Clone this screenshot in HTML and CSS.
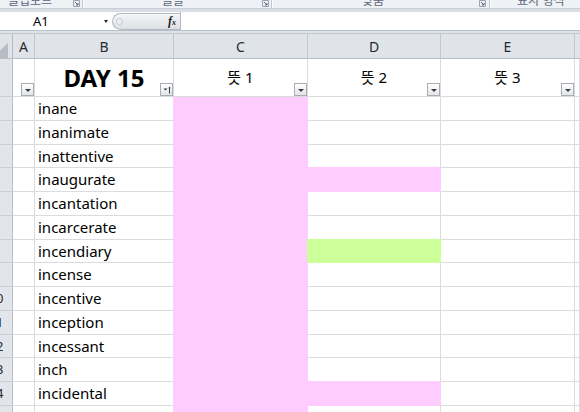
FILE: index.html
```html
<!DOCTYPE html>
<html lang="ko">
<head>
<meta charset="utf-8">
<title>DAY 15</title>
<link rel="stylesheet" href="styles.css">
</head>
<body>
<div class="app">
  <div class="ribbon">
    <div class="grp g1"><span class="glabel">클립보드</span><svg class="launch" viewBox="0 0 7 7"><path d="M0.5 0.5H6.5V6.5H0.5Z" fill="none" stroke="#9aa3ae"/><path d="M2 2L5 5M5 3V5H3" fill="none" stroke="#5d6877"/></svg></div>
    <div class="grp g2"><span class="glabel">글꼴</span><svg class="launch" viewBox="0 0 7 7"><path d="M0.5 0.5H6.5V6.5H0.5Z" fill="none" stroke="#9aa3ae"/><path d="M2 2L5 5M5 3V5H3" fill="none" stroke="#5d6877"/></svg></div>
    <div class="grp g3"><span class="glabel">맞춤</span><svg class="launch" viewBox="0 0 7 7"><path d="M0.5 0.5H6.5V6.5H0.5Z" fill="none" stroke="#9aa3ae"/><path d="M2 2L5 5M5 3V5H3" fill="none" stroke="#5d6877"/></svg></div>
    <div class="grp g4"><span class="glabel">표시 형식</span></div>
  </div>
  <div class="band"></div>
  <div class="fbar">
    <div class="namebox"><span class="ref">A1</span><span class="ddarrow"></span></div>
    <div class="fbtns"><span class="grip"></span><span class="fx"><i>f</i><span class="fxx">x</span></span></div>
    <div class="finput"></div>
  </div>
  <div class="band2"></div>
  <div class="sheet">
    <!-- column headers -->
    <div class="c ch corner"><svg class="tri" viewBox="0 0 12 18"><path d="M8 2V17H-8Z" fill="#b6bcc4"/></svg></div>
    <div class="c ch">A</div>
    <div class="c ch">B</div>
    <div class="c ch">C</div>
    <div class="c ch">D</div>
    <div class="c ch">E</div>
    <div class="c ch last"></div>

    <!-- row 1 -->
    <div class="c rh"><div class="rn">1</div></div>
    <div class="c hc"><span class="fb"><span class="dn"></span></span></div>
    <div class="c hc day">DAY 15<span class="fb"><svg class="sorti" viewBox="0 0 11 11"><path d="M2.5 4.5H6.5L4.5 6.5Z" fill="#3c3c3c"/><path d="M8.5 3V9.5" stroke="#3c3c3c"/><path d="M7.3 4.3L8.5 2.6L9.7 4.3Z" fill="#3c3c3c"/></svg></span></div>
    <div class="c hc mean">뜻 1<span class="fb"><span class="dn"></span></span></div>
    <div class="c hc mean">뜻 2<span class="fb"><span class="dn"></span></span></div>
    <div class="c hc mean">뜻 3<span class="fb"><span class="dn"></span></span></div>
    <div class="c"></div>

    <div class="c rh"><div class="rn">2</div></div><div class="c"></div><div class="c w">inane</div><div class="c pk top0"></div><div class="c"></div><div class="c"></div><div class="c"></div>
    <div class="c rh"><div class="rn">3</div></div><div class="c"></div><div class="c w">inanimate</div><div class="c pk"></div><div class="c"></div><div class="c"></div><div class="c"></div>
    <div class="c rh"><div class="rn">4</div></div><div class="c"></div><div class="c w">inattentive</div><div class="c pk"></div><div class="c"></div><div class="c"></div><div class="c"></div>
    <div class="c rh"><div class="rn">5</div></div><div class="c"></div><div class="c w">inaugurate</div><div class="c pk"></div><div class="c pk"></div><div class="c"></div><div class="c"></div>
    <div class="c rh"><div class="rn">6</div></div><div class="c"></div><div class="c w">incantation</div><div class="c pk"></div><div class="c"></div><div class="c"></div><div class="c"></div>
    <div class="c rh"><div class="rn">7</div></div><div class="c"></div><div class="c w">incarcerate</div><div class="c pk"></div><div class="c"></div><div class="c"></div><div class="c"></div>
    <div class="c rh"><div class="rn">8</div></div><div class="c"></div><div class="c w">incendiary</div><div class="c pk"></div><div class="c gr"></div><div class="c"></div><div class="c"></div>
    <div class="c rh"><div class="rn">9</div></div><div class="c"></div><div class="c w">incense</div><div class="c pk"></div><div class="c"></div><div class="c"></div><div class="c"></div>
    <div class="c rh"><div class="rn">10</div></div><div class="c"></div><div class="c w">incentive</div><div class="c pk"></div><div class="c"></div><div class="c"></div><div class="c"></div>
    <div class="c rh"><div class="rn">11</div></div><div class="c"></div><div class="c w">inception</div><div class="c pk"></div><div class="c"></div><div class="c"></div><div class="c"></div>
    <div class="c rh"><div class="rn">12</div></div><div class="c"></div><div class="c w">incessant</div><div class="c pk"></div><div class="c"></div><div class="c"></div><div class="c"></div>
    <div class="c rh"><div class="rn">13</div></div><div class="c"></div><div class="c w">inch</div><div class="c pk"></div><div class="c"></div><div class="c"></div><div class="c"></div>
    <div class="c rh"><div class="rn">14</div></div><div class="c"></div><div class="c w">incidental</div><div class="c pk"></div><div class="c pk"></div><div class="c"></div><div class="c"></div>
    <div class="c rh"><div class="rn">15</div></div><div class="c"></div><div class="c w">incinerate</div><div class="c pk"></div><div class="c"></div><div class="c"></div><div class="c"></div>
  </div>
</div>
</body>
</html>
```

FILE: styles.css
```css
* { box-sizing: border-box; margin: 0; padding: 0; }
html, body { width: 580px; height: 412px; overflow: hidden; background: #fff; }
body { font-family: "Noto Sans", "Noto Sans CJK KR", sans-serif; color: #000; }

.app { width: 580px; height: 412px; overflow: hidden; }

/* ribbon group labels strip */
.ribbon { display: flex; height: 9px; background: #eef1f5; border-bottom: 1px solid #c9ced6; overflow: hidden; }
.grp { display: flex; justify-content: space-between; align-items: flex-start; height: 8px; border-right: 1px solid #c3c9d1; box-shadow: 1px 0 0 #fafbfc; overflow: hidden; }
.g1 { width: 83px; padding-left: 8px; padding-right: 2px; }
.g2 { width: 189px; padding-left: 79px; padding-right: 2px; }
.g3 { width: 218px; padding-left: 90px; padding-right: 3px; }
.g4 { flex: 1; padding-left: 27px; border-right: none; box-shadow: none; }
.glabel { font-family: "Noto Sans CJK KR", sans-serif; font-size: 12px; line-height: 12px; margin-top: -6px; color: #5b6678; white-space: nowrap; }
.launch { width: 7px; height: 7px; margin-top: 0; flex: none; }

.band { height: 3px; background: #d9dee5; }

/* formula bar */
.fbar { display: flex; height: 19px; background: #fff; border-bottom: 1px solid #bac1ca; }
.namebox { width: 112px; display: flex; align-items: center; padding-left: 33px; }
.ref { font-size: 13px; line-height: 18px; width: 71px; }
.ddarrow { width: 0; height: 0; border-left: 2.5px solid transparent; border-right: 2.5px solid transparent; border-top: 3px solid #222; }
.fbtns { width: 68px; height: 17px; margin-top: 1px; display: flex; align-items: center; justify-content: space-between; padding: 0 4px 0 3px; border: 1px solid #b1b8c1; border-right: none; border-radius: 9px 0 0 9px; background: linear-gradient(#f4f5f7, #dde1e6); }
.grip { width: 7px; height: 7px; border: 1px solid #c5cbd2; border-radius: 50%; background: #eceef1; }
.fx { font-family: "Liberation Serif", serif; font-size: 12px; line-height: 12px; color: #222; font-weight: bold; }
.fxx { font-size: 8px; font-style: italic; }
.finput { flex: 1; border-left: 1px solid #b1b8c1; }

.band2 { height: 2px; background: #dde2e8; }

/* sheet grid */
.sheet { display: grid; grid-template-columns: 13px 22px 139px 134px 133px 134px 1fr; grid-template-rows: 26px 38px repeat(14, 23.75px); }
.c { border-right: 1px solid #dadcdf; border-bottom: 1px solid #dadcdf; background: #fff; overflow: hidden; white-space: nowrap; position: relative; }

.ch { background: #e0e4e9; border-top: 1px solid #c2c8d0; border-right-color: #c1c7cf; border-bottom-color: #b7bec7; text-align: center; font-size: 14px; line-height: 23px; padding-top: 1px; color: #1f2937; }
.ch.last { border-right: none; }
.corner { border-right-color: #b4bbc4; }
.tri { display: block; width: 12px; height: 18px; margin-top: 6px; }

.rh { background: #e2e6eb; border-right-color: #b7bec7; border-bottom-color: #cbd0d7; font-size: 13px; line-height: 23px; color: #2b2b2b; }
.rn { width: 32px; margin-left: -20px; text-align: center; }

.hc { text-align: center; line-height: 37px; overflow: visible; }
.day { font-size: 24px; font-weight: bold; }
.mean { font-size: 15px; }
.fb { position: absolute; right: 0; bottom: 0; width: 13px; height: 13px; border: 1px solid #a8adb3; background: linear-gradient(#ffffff, #e3e5e8); display: flex; align-items: center; justify-content: center; }
.dn { width: 0; height: 0; border-left: 3px solid transparent; border-right: 3px solid transparent; border-top: 3px solid #3c3c3c; margin-top: 1px; }
.sorti { width: 11px; height: 11px; display: block; }

.w { font-size: 15px; line-height: 23px; padding-left: 3px; }

.pk { background: #ffccff; border-color: transparent; box-shadow: -1px 0 0 #ffccff, 0 -1px 0 #ffccff, -1px -1px 0 #ffccff; }
.pk.top0 { box-shadow: -1px 0 0 #ffccff; }
.gr { background: #ccff99; border-color: transparent; box-shadow: -1px 0 0 #ccff99, 0 -1px 0 #ccff99, -1px -1px 0 #ccff99; }
```
